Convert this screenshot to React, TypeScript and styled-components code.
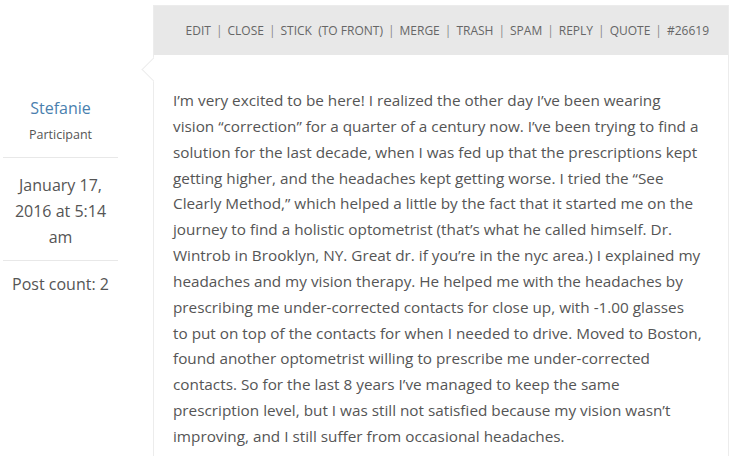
import React from "react";
import styled, { createGlobalStyle } from "styled-components";

const Global = createGlobalStyle`
  html, body { margin: 0; padding: 0; background: #fff; }
  body { font-family: "Open Sans", "Liberation Sans", sans-serif; color: #555; }
`;

const Reply = styled.div`
  display: flex;
  align-items: stretch;
  padding-top: 5px;
  width: 740px;
  height: 451px;
  overflow: hidden;
`;

const Author = styled.div`
  width: 121px;
  flex: none;
  display: flex;
  flex-direction: column;
  align-items: stretch;
  padding-top: 91px;
  margin-right: 32px;
  text-align: center;
`;

const Name = styled.a`
  font-size: 16px;
  line-height: 24px;
  color: #4a7fae;
  text-decoration: none;
`;

const Role = styled.div`
  font-size: 12.5px;
  line-height: 20px;
  color: #555;
  margin-top: 5px;
  padding-bottom: 12px;
`;

const Divider = styled.hr`
  margin: 0 0 0 3px;
  width: 115px;
  border: none;
  border-top: 1px solid #e8e8e8;
`;

const Meta = styled.div<{ $top: number; $bottom: number }>`
  font-size: 16px;
  line-height: 26px;
  color: #555;
  padding: ${(p) => p.$top}px 8px ${(p) => p.$bottom}px;
`;

const Box = styled.div`
  position: relative;
  width: 574px;
  flex: none;
  border: 1px solid #ececec;
  border-bottom: none;
`;

const Header = styled.div`
  background: #e8e8e8;
  height: 49px;
  display: flex;
  align-items: center;
  justify-content: flex-end;
  padding-right: 19px;
  font-size: 12px;
  color: #666;
  text-transform: uppercase;
`;

const Action = styled.span`
  white-space: pre;
`;

const Sep = styled.span`
  color: #888;
  margin: 0 5px;
`;

const Arrow = styled.div`
  position: absolute;
  left: -9px;
  top: 55px;
  width: 16px;
  height: 16px;
  background: #fff;
  border-left: 1px solid #ececec;
  border-bottom: 1px solid #ececec;
  transform: rotate(45deg);
`;

const Body = styled.div`
  padding: 33px 19px 20px 19px;
  font-size: 15.3px;
  line-height: 25.85px;
  color: #555;
`;

const Line = styled.span`
  display: block;
  white-space: nowrap;
`;

const actions = ["Edit", "Close", "Stick  (To Front)", "Merge", "Trash", "Spam", "Reply", "Quote", "#26619"];

const lines = [
  "I’m very excited to be here! I realized the other day I’ve been wearing",
  "vision “correction” for a quarter of a century now. I’ve been trying to find a",
  "solution for the last decade, when I was fed up that the prescriptions kept",
  "getting higher, and the headaches kept getting worse. I tried the “See",
  "Clearly Method,” which helped a little by the fact that it started me on the",
  "journey to find a holistic optometrist (that’s what he called himself. Dr.",
  "Wintrob in Brooklyn, NY. Great dr. if you’re in the nyc area.) I explained my",
  "headaches and my vision therapy. He helped me with the headaches by",
  "prescribing me under-corrected contacts for close up, with -1.00 glasses",
  "to put on top of the contacts for when I needed to drive. Moved to Boston,",
  "found another optometrist willing to prescribe me under-corrected",
  "contacts. So for the last 8 years I’ve managed to keep the same",
  "prescription level, but I was still not satisfied because my vision wasn’t",
  "improving, and I still suffer from occasional headaches.",
];

export default function App() {
  return (
    <>
      <Global />
      <Reply>
        <Author>
          <Name href="#">Stefanie</Name>
          <Role>Participant</Role>
          <Divider />
          <Meta $top={14} $bottom={10}>January 17, 2016 at 5:14 am</Meta>
          <Divider />
          <Meta $top={10} $bottom={10}>Post count: 2</Meta>
        </Author>
        <Box>
          <Header>
            {actions.map((a, i) => (
              <React.Fragment key={a}>
                {i > 0 && <Sep>|</Sep>}
                <Action>{a}</Action>
              </React.Fragment>
            ))}
          </Header>
          <Arrow />
          <Body>
            {lines.map((l) => (
              <Line key={l}>{l}</Line>
            ))}
          </Body>
        </Box>
      </Reply>
    </>
  );
}
